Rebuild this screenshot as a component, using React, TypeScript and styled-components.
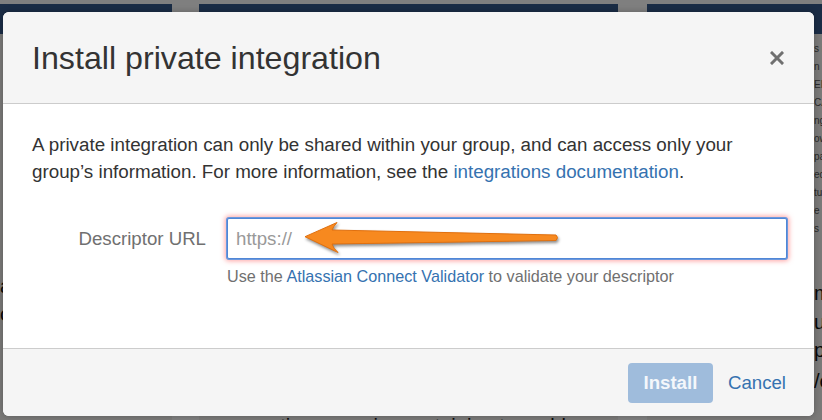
import React from "react";
import styled, { createGlobalStyle } from "styled-components";

const Global = createGlobalStyle`
  html, body { margin: 0; padding: 0; }
  body {
    width: 822px;
    height: 420px;
    overflow: hidden;
    background: #ffffff;
    font-family: "Liberation Sans", Arial, sans-serif;
  }
`;

const Stage = styled.div`
  position: relative;
  width: 822px;
  height: 420px;
  overflow: hidden;
`;

/* ---------- page behind the dialog ---------- */
const Page = styled.div`
  display: flex;
  gap: 27px;
  padding-top: 4px;
  height: 420px;
  box-sizing: border-box;
  background: #ffffff;
`;

const Column = styled.div<{ $w: number; $gapAfter?: number }>`
  width: ${(p) => p.$w}px;
  flex: none;
  display: flex;
  flex-direction: column;
  margin-right: ${(p) => p.$gapAfter ?? 0}px;
  background: #f4f3f0;
  overflow: hidden;
`;

const NavBar = styled.div`
  height: 30px;
  background: #34598a;
  flex: none;
`;

const ColBody = styled.div<{ $pt: number; $pl: number }>`
  display: flex;
  flex-direction: column;
  padding: ${(p) => p.$pt}px 0 0 ${(p) => p.$pl}px;
  gap: 4px;
`;

const SmallLine = styled.div`
  font-size: 10px;
  line-height: 14px;
  color: #555;
  white-space: nowrap;
`;

const BigLine = styled.div<{ $h: number }>`
  font-size: 20px;
  line-height: ${(p) => p.$h}px;
  color: #111;
  white-space: nowrap;
`;

const Dim = styled.div`
  position: absolute;
  inset: 0;
  background: rgba(0, 0, 0, 0.5);
`;

/* ---------- dialog ---------- */
const Dialog = styled.div`
  position: absolute;
  left: 3px;
  top: 12px;
  width: 811px;
  height: 404px;
  border-radius: 6px;
  overflow: hidden;
  background: #ffffff;
  display: flex;
  flex-direction: column;
  box-shadow: 0 0 6px rgba(0, 0, 0, 0.25);
`;

const Header = styled.div`
  flex: none;
  height: 91px;
  background: #f5f5f5;
  border-bottom: 1px solid #cccccc;
  display: flex;
  align-items: center;
  justify-content: space-between;
  padding: 0 30px 0 29px;
`;

const Title = styled.h2`
  margin: 0;
  font-size: 32.2px;
  font-weight: normal;
  color: #333333;
  line-height: 40px;
`;

const CloseButton = styled.button`
  border: 0;
  background: none;
  padding: 0;
  width: 15px;
  height: 15px;
  display: flex;
  align-items: center;
  justify-content: center;
  cursor: pointer;
`;

const Body = styled.div`
  flex: 1;
  padding: 28px 27px 0 29px;
  color: #333333;
`;

const Intro = styled.p`
  margin: 0;
  font-size: 18.8px;
  line-height: 26.67px;
`;

const Link = styled.a`
  color: #3572b0;
  text-decoration: none;
`;

const FormRow = styled.div`
  display: grid;
  grid-template-columns: 174px 1fr;
  column-gap: 21px;
  margin-top: 33px;
`;

const Label = styled.label`
  text-align: right;
  font-size: 18.67px;
  line-height: 41px;
  color: #707070;
`;

const FieldWrap = styled.div`
  position: relative;
`;

const UrlInput = styled.input`
  display: block;
  width: 100%;
  height: 41px;
  box-sizing: border-box;
  border: 1px solid #4f86d6;
  border-radius: 2px;
  padding: 0 8px;
  font-family: "Liberation Sans", Arial, sans-serif;
  font-size: 18.67px;
  color: #333;
  background: #fff;
  outline: none;
  box-shadow: 0 0 0 1px #6b98dc, 0 0 5px 2px rgba(255, 90, 90, 0.55);
  &::placeholder {
    color: #999999;
  }
`;

const Hint = styled.div`
  grid-column: 2;
  margin-top: 7px;
  font-size: 16.2px;
  line-height: 21px;
  color: #707070;
`;

const Annotation = styled.svg`
  position: absolute;
  left: 73px;
  top: -4px;
  overflow: visible;
  filter: drop-shadow(1px 2px 1.5px rgba(0, 0, 0, 0.45));
  pointer-events: none;
`;

const Footer = styled.div`
  flex: none;
  height: 67px;
  background: #f5f5f5;
  border-top: 1px solid #cccccc;
  display: flex;
  align-items: center;
  justify-content: flex-end;
  gap: 15px;
  padding-right: 28px;
`;

const PrimaryButton = styled.button`
  height: 40px;
  width: 85px;
  border: 0;
  border-radius: 4px;
  background: #9fbcdc;
  color: #f4f7fb;
  font-family: "Liberation Sans", Arial, sans-serif;
  font-size: 18.67px;
  font-weight: bold;
  padding: 0;
`;

const TextButton = styled.button`
  border: 0;
  background: none;
  padding: 0;
  color: #3572b0;
  font-family: "Liberation Sans", Arial, sans-serif;
  font-size: 18.67px;
`;

export default function App() {
  return (
    <Stage>
      <Global />
      <Page>
        <Column $w={172}>
          <NavBar />
          <ColBody $pt={240} $pl={0}>
            <BigLine $h={24}>about</BigLine>
            <BigLine $h={24}>on</BigLine>
          </ColBody>
        </Column>
        <Column $w={419} $gapAfter={2}>
          <NavBar />
          <ColBody $pt={380} $pl={0}>
            <BigLine $h={24}>conversation occurring pertaining to problem</BigLine>
          </ColBody>
        </Column>
        <Column $w={175}>
          <NavBar />
          <ColBody $pt={8} $pl={167}>
            <SmallLine>s info</SmallLine>
            <SmallLine>n</SmallLine>
            <SmallLine>ED</SmallLine>
            <SmallLine>CAN</SmallLine>
            <SmallLine>ng</SmallLine>
            <SmallLine>ow</SmallLine>
            <SmallLine>pa</SmallLine>
            <SmallLine>ed</SmallLine>
            <SmallLine>tu</SmallLine>
            <SmallLine>e</SmallLine>
            <SmallLine>s</SmallLine>
            <BigLine $h={26} style={{ marginTop: 40 }}>more</BigLine>
            <BigLine $h={24}>ul</BigLine>
            <BigLine $h={24}>pl</BigLine>
            <BigLine $h={30}>/c</BigLine>
          </ColBody>
        </Column>
      </Page>
      <Dim />
      <Dialog role="dialog">
        <Header>
          <Title>Install private integration</Title>
          <CloseButton aria-label="Close">
            <svg width="14" height="14" viewBox="0 0 14 14">
              <path d="M2 2 L12 12 M12 2 L2 12" stroke="#707070" strokeWidth="3" strokeLinecap="square" />
            </svg>
          </CloseButton>
        </Header>
        <Body>
          <Intro>
            A private integration can only be shared within your group, and can access only your
            group’s information. For more information, see the{" "}
            <Link href="#">integrations documentation</Link>.
          </Intro>
          <FormRow>
            <Label htmlFor="descriptor-url">Descriptor URL</Label>
            <FieldWrap>
              <UrlInput id="descriptor-url" placeholder="https://" />
              <Annotation width="262" height="46" viewBox="0 0 262 46">
                <path
                  d="M5 22.7 L37 8.5 Q33 13 32 16 L256 21 Q259 23.5 256 26.5 L32 30 Q33 34 38 38.5 Z"
                  fill="#f7891f"
                  stroke="#e0700f"
                  strokeWidth="1"
                  strokeLinejoin="round"
                />
              </Annotation>
            </FieldWrap>
            <Hint>
              Use the <Link href="#">Atlassian Connect Validator</Link> to validate your descriptor
            </Hint>
          </FormRow>
        </Body>
        <Footer>
          <PrimaryButton disabled>Install</PrimaryButton>
          <TextButton>Cancel</TextButton>
        </Footer>
      </Dialog>
    </Stage>
  );
}
